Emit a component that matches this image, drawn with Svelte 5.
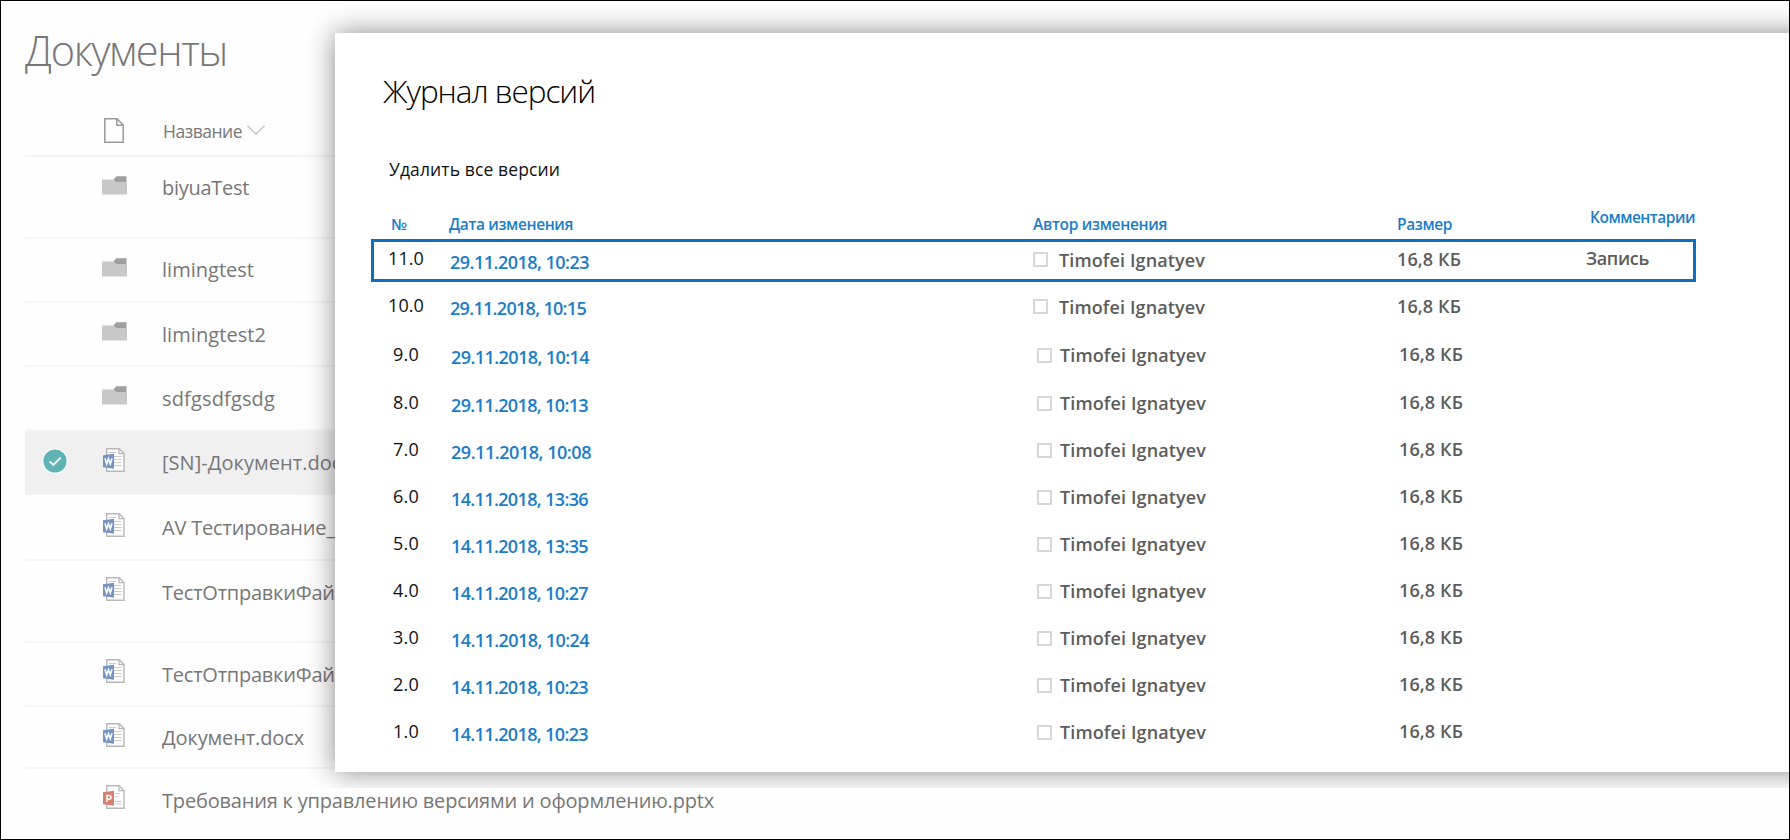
<script>
  const files = [
    { name: 'biyuaTest', kind: 'folder', h: 82, w: 87, icon: 17, text: 17 },
    { name: 'limingtest', kind: 'folder', h: 64, w: 92, icon: 17, text: 17 },
    { name: 'limingtest2', kind: 'folder', h: 64, w: 104, icon: 17, text: 18 },
    { name: 'sdfgsdfgsdg', kind: 'folder', h: 64, w: 113, icon: 17, text: 18 },
    { name: '[SN]-Документ.docx', kind: 'word', h: 64, w: 190, icon: 17, text: 18, selected: true },
    { name: 'AV Тестирование_', kind: 'word', h: 66, w: 173, icon: 18, text: 19 },
    { name: 'ТестОтправкиФайл', kind: 'word', h: 82, w: 184, icon: 16, text: 18 },
    { name: 'ТестОтправкиФайл', kind: 'word', h: 64, w: 184, icon: 16, text: 18 },
    { name: 'Документ.docx', kind: 'word', h: 62, w: 142, icon: 16, text: 17 },
    { name: 'Требования к управлению версиями и оформлению.pptx', kind: 'ppt', h: 64, w: 552, icon: 16, text: 18 }
  ];

  const versions = [
    { no: '11.0', date: '29.11.2018, 10:23', dw: 139, h: 47, comment: 'Запись' },
    { no: '10.0', date: '29.11.2018, 10:15', dw: 136, h: 48 },
    { no: '9.0', date: '29.11.2018, 10:14', dw: 138, h: 48 },
    { no: '8.0', date: '29.11.2018, 10:13', dw: 137, h: 47 },
    { no: '7.0', date: '29.11.2018, 10:08', dw: 140, h: 47 },
    { no: '6.0', date: '14.11.2018, 13:36', dw: 137, h: 47 },
    { no: '5.0', date: '14.11.2018, 13:35', dw: 137, h: 47 },
    { no: '4.0', date: '14.11.2018, 10:27', dw: 137, h: 47 },
    { no: '3.0', date: '14.11.2018, 10:24', dw: 138, h: 47 },
    { no: '2.0', date: '14.11.2018, 10:23', dw: 137, h: 47 },
    { no: '1.0', date: '14.11.2018, 10:23', dw: 137, h: 47 }
  ];

  // Tracks a label so that it fills the given width.
  function fit(node, width) {
    const natural = node.getBoundingClientRect().width;
    node.style.letterSpacing = (width - natural) / node.textContent.length + 'px';
  }
</script>

<main class="page">
  <section class="library">
    <h1><span use:fit={202}>Документы</span></h1>
    <div class="head">
      <svg class="sheet" viewBox="0 0 20 25"><path d="M.8 .8H13L19.2 7V24.2H.8zM12.8 .8V7.2H19.2" /></svg>
      <span class="label" use:fit={79}>Название</span>
      <svg class="chev" viewBox="0 0 18 10"><path d="M.5 .8L9 9L17.5 .8" /></svg>
    </div>
    {#each files as f}
      <div class="file" class:selected={f.selected} style:height="{f.h}px">
        <div class="check">
          {#if f.selected}
            <svg viewBox="0 0 26 26"><circle cx="13" cy="13" r="12.6" fill="#fff" /><circle cx="13" cy="13" r="11.6" fill="#5fb3b3" /><path d="M7.5 13.3L11.3 17L18.7 9.6" fill="none" stroke="#fff" stroke-width="1.8" /></svg>
          {/if}
        </div>
        <div class="icon" style:padding-top="{f.icon}px">
          {#if f.kind === 'folder'}
            <svg class="folder" viewBox="0 0 25 19"><path d="M0 3.5H12L14 6.3H25V18.5H0z" fill="#c8c8c8" /><path d="M11.5 3.2L14.5 .3H24.5V6.3H14z" fill="#9f9f9f" /></svg>
          {:else}
            <svg class="doc" viewBox="0 0 22 24">
              <path d="M3.7 .7H16.2L21 5.5V23.2H3.7z" fill="#fff" stroke="#b8b8b8" stroke-width="1.4" />
              <path d="M16 .7V5.7H21" fill="none" stroke="#b8b8b8" stroke-width="1.3" />
              {#if f.kind === 'word'}
                <path d="M6 4.5H13M11 8.5H18.5M11 11.5H18.5M11 14.5H18.5M11 17.5H18.5" stroke="#ccc" stroke-width="1.1" />
                <path d="M0 7.3L11 5.8V20.7L0 19.2z" fill="#7594c6" />
                <path d="M2 10.3L3.7 16L5.5 10.8L7.3 16L9 10.3" fill="none" stroke="#fff" stroke-width="1.6" />
              {:else}
                <path d="M12 8.5H17M12 11.5H15M12 16.5H18.5M12 19H18.5" stroke="#ccc" stroke-width="1.1" />
                <path d="M0 7.3L11 5.8V20.7L0 19.2z" fill="#d57f70" />
                <path d="M4 17V10.5H6.3Q8 10.7 8 12.3Q8 14 6.3 14.2H4" fill="none" stroke="#fff" stroke-width="1.6" />
              {/if}
            </svg>
          {/if}
        </div>
        <div class="name" style:padding-top="{f.text}px"><span use:fit={f.w}>{f.name}</span></div>
      </div>
    {/each}
  </section>

  <div class="layer">
    <section class="dialog">
      <h2><span use:fit={212}>Журнал версий</span></h2>
      <div class="clear"><span use:fit={171}>Удалить все версии</span></div>
      <div class="cols titles">
        <div><span use:fit={19}>№</span></div>
        <div><span use:fit={124}>Дата изменения</span></div>
        <div><span use:fit={134}>Автор изменения</span></div>
        <div><span use:fit={55}>Размер</span></div>
        <div class="up"><span use:fit={105}>Комментарии</span></div>
      </div>
      <div class="rows">
        {#each versions as v, i}
          <div class="cols row" class:shift={i > 1} style:height="{v.h}px">
            <div class="no"><span use:fit={i > 1 ? 26 : 36}>{v.no}</span></div>
            <div class="date" class:first={i === 0}><span use:fit={v.dw}>{v.date}</span></div>
            <div class="author"><i></i><span use:fit={146}>Timofei Ignatyev</span></div>
            <div class="size"><span use:fit={64}>16,8 КБ</span></div>
            <div class="comment">{#if v.comment}<span use:fit={63}>{v.comment}</span>{/if}</div>
          </div>
        {/each}
        <div class="frame"></div>
      </div>
    </section>
  </div>
</main>

<style>
  .page { position: relative; box-sizing: border-box; width: 1790px; height: 840px; overflow: hidden; border: 1px solid #000; background: #fefefe; font-family: "Open Sans", "Noto Sans", sans-serif; white-space: nowrap; }
  span { display: inline-block; }
  .library { padding: 19px 0 0 24px; color: #777; }
  h1 { margin: 0; height: 91px; font-size: 41.5px; line-height: 60px; font-weight: 300; }
  .head { display: flex; box-sizing: border-box; height: 46px; padding-left: 79px; border-bottom: 2px solid #f3f3f3; font-size: 17.5px; line-height: 24px; }
  .sheet { width: 20px; height: 25px; margin: 7px 39px 0 0; fill: none; stroke: #999; stroke-width: 1.5; }
  .label { margin-top: 8px; }
  .chev { width: 18px; height: 10px; margin: 14px 0 0 5px; fill: none; stroke: #c4c4c4; stroke-width: 1.4; }
  .file { display: flex; box-sizing: border-box; width: 1740px; border-bottom: 2px solid #f6f6f6; font-size: 20px; line-height: 28px; }
  .file:last-child { border: 0; }
  .selected { background: #f0f0f0; border-color: #f2f2f2; }
  .check { width: 77px; padding: 17px 0 0 17px; box-sizing: border-box; }
  .check svg { width: 26px; height: 26px; display: block; }
  .icon { width: 60px; }
  .icon svg { display: block; }
  .folder { width: 25px; height: 19px; margin-top: 2px; }
  .doc { width: 22px; height: 24px; margin-left: 1px; }
  .layer { position: absolute; left: 0; top: 0; width: 1788px; height: 787px; overflow: hidden; }
  .dialog { position: absolute; left: 334px; top: 32px; width: 1480px; height: 739px; background: #fff; box-shadow: 0 0 26px rgba(0, 0, 0, .46); }
  h2 { margin: 0; padding: 33px 0 0 48px; height: 85px; color: #000; font-size: 31.5px; line-height: 50px; font-weight: 300; }
  .clear { height: 61px; padding: 6px 0 0 54px; color: #111; font-size: 17.5px; line-height: 24px; }
  .cols { display: grid; grid-template-columns: 57px 584px 364px 190px 120px; padding-left: 57px; }
  .titles { height: 21px; color: #1a7dc8; font-size: 15.5px; line-height: 20px; font-weight: 600; }
  .titles div { margin-top: -4px; }
  .titles div:first-child { margin-left: -1px; }
  .titles .up { margin-top: -11px; padding-left: 3px; }
  .rows { position: relative; }
  .row { font-size: 18px; line-height: 24px; font-weight: 600; color: #5c5c5c; }
  .no { margin-left: -4px; padding-top: 7px; color: #111; font-weight: 400; }
  .date { padding: 10px 0 0 1px; color: #1a7dc8; }
  .date.first { padding-top: 11px; }
  .author { display: flex; padding-top: 9px; }
  .author i { box-sizing: border-box; width: 15px; height: 15px; margin: 4px 11px 0 0; border: 2px solid #d8d8d8; }
  .size { padding-top: 8px; }
  .comment { margin-left: -1px; padding-top: 7px; }
  .shift .no { margin-left: 1px; padding-top: 8px; }
  .shift .date { padding: 11px 0 0 2px; }
  .shift .author { padding-left: 4px; }
  .shift .author i { margin: 5px 8px 0 0; }
  .shift .size { padding-left: 2px; }
  .frame { position: absolute; left: 36px; top: 0; box-sizing: border-box; width: 1325px; height: 43px; border: 3px solid #106ebe; }
</style>
